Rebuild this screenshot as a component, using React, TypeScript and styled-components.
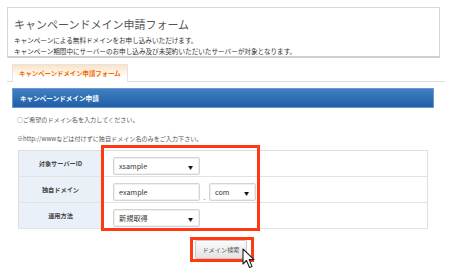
import styled, { createGlobalStyle } from "styled-components"

const GlobalStyle = createGlobalStyle`
    html, body {
        margin: 0;
        padding: 0;
        background: #ffffff;
    }
    body {
        font-family: "Noto Sans CJK JP", "Liberation Sans", sans-serif;
        color: #444;
    }
`

const Page = styled.div`
    width: 450px;
    height: 271px;
    padding: 7px 0 0 7px;
    box-sizing: border-box;
    position: relative;
    overflow: hidden;
`

const IntroBox = styled.div`
    width: 433px;
    height: 51px;
    box-sizing: border-box;
    border: 1px solid #d6d6d6;
    border-bottom: 2px solid #d0d0d0;
    padding: 9px 0 0 6px;
`

const Title = styled.h1`
    margin: 0 0 4px 0;
    font-size: 11px;
    font-weight: 400;
    line-height: 14px;
    color: #555;
`

const Note = styled.p`
    margin: 0;
    font-size: 6.6px;
    line-height: 11px;
    color: #333;
`

const TabBar = styled.div`
    width: 433px;
    margin-top: 5px;
    height: 18px;
    border-bottom: 1px solid #dcdcdc;
    display: flex;
    padding-left: 5px;
`

const Tab = styled.div`
    height: 18px;
    width: 116px;
    box-sizing: border-box;
    border: 1px solid #e4e4e4;
    border-bottom: none;
    background: linear-gradient(#fde2c4, #ffffff 70%);
    color: #f26b00;
    font-size: 6.4px;
    font-weight: 700;
    display: flex;
    align-items: center;
    padding-left: 6px;
    margin-top: 1px;
`

const Section = styled.div`
    margin: 6px 0 0 5px;
    width: 422px;
    position: relative;
`

const SectionHeader = styled.div`
    height: 20px;
    box-sizing: border-box;
    border: 1px solid #6b9bd2;
    background: linear-gradient(#3f7fc2, #215fa6);
    color: #ffffff;
    font-size: 6.6px;
    font-weight: 700;
    display: flex;
    align-items: center;
    padding-left: 7px;
`

const Guide = styled.p`
    margin: 0;
    padding-left: 5px;
    font-size: 6.1px;
    line-height: 19px;
    color: #555;
    font-variant-emoji: text;
    &:first-of-type {
        margin-top: 2px;
    }
`

const FormTable = styled.table`
    margin: 2px 0 0 6px;
    width: 410px;
    border-collapse: collapse;
    border: 1px solid #dedede;
`

const Row = styled.tr`
    height: 26px;
    border-bottom: 1px solid #e2e2e2;
`

const Label = styled.th`
    width: 83px;
    background: #e9f0f8;
    font-size: 6.2px;
    font-weight: 700;
    color: #444;
    text-align: center;
    padding: 0;
`

const Cell = styled.td`
    padding: 0 0 0 11px;
    vertical-align: middle;
`

const Field = styled.div<{ $width: number }>`
    display: inline-flex;
    align-items: center;
    justify-content: space-between;
    width: ${(props) => props.$width}px;
    height: 18px;
    box-sizing: border-box;
    border: 1px solid #d4d4d4;
    border-radius: 2px;
    background: #ffffff;
    box-shadow: inset 0 0 0 1px #f0f0f0;
    padding: 0 6px 0 5px;
    font-size: 7.2px;
    color: #333;
    vertical-align: middle;
`

const Arrow = styled.span`
    font-size: 5px;
    color: #111;
`

const Dot = styled.span`
    display: inline-block;
    width: 9px;
    text-align: center;
    font-size: 7px;
    color: #666;
    vertical-align: bottom;
`

const Highlight = styled.div`
    position: absolute;
    left: 89px;
    top: 57px;
    width: 159px;
    height: 86px;
    box-sizing: border-box;
    border: 3px solid #ff3a12;
    pointer-events: none;
`

const ButtonRow = styled.div`
    display: flex;
    justify-content: center;
    margin-top: 8px;
    padding-right: 2px;
`

const ButtonFrame = styled.div`
    border: 3px solid #ff3a12;
    padding: 0 4px 0 2px;
    height: 25px;
    box-sizing: border-box;
    position: relative;
`

const SearchButton = styled.button`
    display: block;
    width: 52px;
    height: 19px;
    border: 1px solid #c8c8c8;
    border-radius: 2px;
    background: linear-gradient(#fbfbfb, #e2e2e2);
    font-family: "Noto Sans CJK JP", sans-serif;
    font-size: 6.2px;
    color: #555;
    padding: 0;
`

const Cursor = styled.svg`
    position: absolute;
    left: 49px;
    top: 8px;
`

export default function App() {
    return (
        <Page>
            <GlobalStyle />
            <IntroBox>
                <Title>キャンペーンドメイン申請フォーム</Title>
                <Note>キャンペーンによる無料ドメインをお申し込みいただけます。</Note>
                <Note>
                    キャンペーン期間中にサーバーのお申し込み及び未契約いただいたサーバーが対象となります。
                </Note>
            </IntroBox>
            <TabBar>
                <Tab>キャンペーンドメイン申請フォーム</Tab>
            </TabBar>
            <Section>
                <SectionHeader>キャンペーンドメイン申請</SectionHeader>
                <Guide>{"\u25CB\uFE0E"}ご希望のドメイン名を入力してください。</Guide>
                <Guide>{"\u203B\uFE0E"}http://wwwなどは付けずに独自ドメイン名のみをご入力下さい。</Guide>
                <FormTable>
                    <tbody>
                        <Row>
                            <Label>対象サーバーID</Label>
                            <Cell>
                                <Field $width={87}>
                                    xsample<Arrow>▼</Arrow>
                                </Field>
                            </Cell>
                        </Row>
                        <Row>
                            <Label>独自ドメイン</Label>
                            <Cell>
                                <Field $width={87}>example</Field>
                                <Dot>.</Dot>
                                <Field $width={47}>
                                    com<Arrow>▼</Arrow>
                                </Field>
                            </Cell>
                        </Row>
                        <Row>
                            <Label>運用方法</Label>
                            <Cell>
                                <Field $width={87}>
                                    新規取得<Arrow>▼</Arrow>
                                </Field>
                            </Cell>
                        </Row>
                    </tbody>
                </FormTable>
                <Highlight />
                <ButtonRow>
                    <ButtonFrame>
                        <SearchButton>ドメイン検索</SearchButton>
                        <Cursor width="16" height="22" viewBox="0 0 16 22">
                            <path
                                d="M1 1 L1 16 L4.5 12.5 L7.5 19.5 L10 18.4 L7.2 11.6 L12 11.6 Z"
                                fill="#ffffff"
                                stroke="#222"
                                strokeWidth="1.1"
                                strokeLinejoin="round"
                            />
                        </Cursor>
                    </ButtonFrame>
                </ButtonRow>
            </Section>
        </Page>
    )
}
